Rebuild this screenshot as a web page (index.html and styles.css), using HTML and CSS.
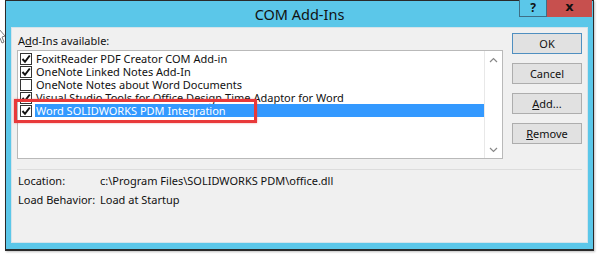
FILE: index.html
```html
<!DOCTYPE html>
<html>
<head>
<meta charset="utf-8">
<link rel="stylesheet" href="styles.css">
</head>
<body>
<svg class="cursor" width="8" height="20" viewBox="0 0 8 20"><path d="M0 2 L6 9 L3 10 L5 15 L3 16 L1 11 L0 12" fill="#fff" stroke="#7a7a7a" stroke-width="1"/></svg>
<div class="window">
  <div class="titlebar">
    <div></div>
    <div class="title">COM Add-Ins</div>
    <div class="controls">
      <div class="help">?</div>
      <div class="close">x</div>
    </div>
  </div>
  <div class="content">
    <div class="main">
      <div class="left">
        <div class="label">A<u>d</u>d-Ins available:</div>
        <div class="listbox">
          <div class="items">
            <div class="item"><span class="cb checked"><svg viewBox="0 0 10 10"><path d="M1.5 5 L4 7.8 L8.8 1.5" fill="none" stroke="#111" stroke-width="2"/></svg></span><span>FoxitReader PDF Creator COM Add-in</span></div>
            <div class="item"><span class="cb checked"><svg viewBox="0 0 10 10"><path d="M1.5 5 L4 7.8 L8.8 1.5" fill="none" stroke="#111" stroke-width="2"/></svg></span><span>OneNote Linked Notes Add-In</span></div>
            <div class="item"><span class="cb"></span><span>OneNote Notes about Word Documents</span></div>
            <div class="item"><span class="cb checked"><svg viewBox="0 0 10 10"><path d="M1.5 5 L4 7.8 L8.8 1.5" fill="none" stroke="#111" stroke-width="2"/></svg></span><span>Visual Studio Tools for Office Design-Time Adaptor for Word</span></div>
            <div class="item selected"><span class="cb checked"><svg viewBox="0 0 10 10"><path d="M1.5 5 L4 7.8 L8.8 1.5" fill="none" stroke="#111" stroke-width="2"/></svg></span><span class="sel-text">Word SOLIDWORKS PDM Integration</span></div>
            <div class="highlight"></div>
          </div>
          <div class="scrollbar">
            <div class="arrow"><svg width="9" height="6" viewBox="0 0 9 6"><path d="M1 5 L4.5 1.5 L8 5" fill="none" stroke="#888" stroke-width="1.2"/></svg></div>
            <div class="arrow"><svg width="9" height="6" viewBox="0 0 9 6"><path d="M1 1 L4.5 4.5 L8 1" fill="none" stroke="#888" stroke-width="1.2"/></svg></div>
          </div>
        </div>
      </div>
      <div class="buttons">
        <div class="btn default">OK</div>
        <div class="btn">Cancel</div>
        <div class="btn"><u>A</u>dd...</div>
        <div class="btn"><u>R</u>emove</div>
      </div>
    </div>
    <div class="sep"></div>
    <div class="info">
      <div>Location:</div><div>c:\Program Files\SOLIDWORKS PDM\office.dll</div>
      <div>Load Behavior:</div><div>Load at Startup</div>
    </div>
  </div>
</div>
</body>
</html>
```
FILE: styles.css
```css
html, body {
  margin: 0;
  padding: 0;
  background: #ffffff;
}
body {
  width: 602px;
  height: 256px;
  position: relative;
  overflow: hidden;
  font-family: "Noto Sans", "Open Sans", sans-serif;
  font-size: 11px;
  color: #111;
}
.cursor {
  position: absolute;
  left: -1px;
  top: 27px;
}
.window {
  margin-left: 5px;
  width: 589px;
  height: 251px;
  box-sizing: border-box;
  border: 1px solid #2a2a2a;
  border-bottom-width: 2px;
  background: #5bc7e9;
  padding: 0 5px 6px 5px;
  display: flex;
  flex-direction: column;
  box-shadow: 1px 1px 2px rgba(0,0,0,0.25);
}
.titlebar {
  height: 26px;
  display: grid;
  grid-template-columns: 1fr auto 1fr;
}
.title {
  font-size: 14.5px;
  line-height: 24px;
  color: #111;
  padding-top: 1px;
}
.controls {
  justify-self: end;
  display: flex;
  margin-top: -1px;
  margin-right: -4px;
  height: 17px;
}
.help {
  width: 26px;
  height: 16px;
  border: 1px solid #3f6f86;
  border-top: none;
  background: #5bc7e9;
  font-weight: bold;
  font-size: 12px;
  line-height: 15px;
  text-align: center;
  color: #111;
}
.close {
  width: 45px;
  height: 17px;
  background: #c7504e;
  font-weight: bold;
  font-size: 13px;
  line-height: 14px;
  text-align: center;
  color: #111;
  font-family: "DejaVu Sans", sans-serif;
}
.content {
  flex: 1;
  background: #f0f0f0;
  border: 1px solid #d4e3ea;
  padding: 5px 5px 0 5px;
}
.main {
  display: grid;
  grid-template-columns: 486px 70px;
  column-gap: 9px;
}
.left {
  padding-top: 1px;
}
.label {
  line-height: 14px;
  height: 14px;
  margin-bottom: 2px;
  padding-left: 1px;
}
.listbox {
  height: 109px;
  box-sizing: border-box;
  border: 1px solid #b9b9b9;
  background: #fff;
  display: flex;
}
.items {
  flex: 1;
  position: relative;
  padding-top: 1px;
  padding-left: 2px;
}
.item {
  height: 13px;
  display: flex;
  align-items: center;
  white-space: nowrap;
  line-height: 13px;
}
.cb {
  width: 10px;
  height: 10px;
  border: 1px solid #333;
  background: #fff;
  margin-right: 4px;
  flex: none;
  display: flex;
}
.cb svg {
  width: 10px;
  height: 10px;
}
.sel-text {
  flex: 1;
  background: #3399ff;
  color: #fff;
  height: 13px;
  padding-left: 1px;
  margin-left: -1px;
}
.highlight {
  position: absolute;
  left: -4px;
  top: 48px;
  width: 243px;
  height: 24px;
  box-sizing: border-box;
  border: 3px solid #e8393a;
  box-shadow: 0 0 2px rgba(230, 59, 59, 0.5);
}
.scrollbar {
  width: 17px;
  border-left: 1px solid #e8e8e8;
  background: #fff;
  display: flex;
  flex-direction: column;
  justify-content: space-between;
}
.arrow {
  height: 17px;
  display: flex;
  align-items: center;
  justify-content: center;
}
.buttons {
  display: flex;
  flex-direction: column;
  gap: 9px;
}
.btn {
  height: 21px;
  box-sizing: border-box;
  border: 1px solid #adadad;
  background: #e1e1e1;
  text-align: center;
  line-height: 19px;
  color: #111;
}
.btn.default {
  border-color: #4f8fc0;
}
.sep {
  height: 1px;
  background: #dcdcdc;
  margin-top: 10px;
}
.info {
  display: grid;
  grid-template-columns: 82px 1fr;
  row-gap: 5px;
  line-height: 14px;
  margin-top: 4px;
  padding-left: 1px;
}
```
